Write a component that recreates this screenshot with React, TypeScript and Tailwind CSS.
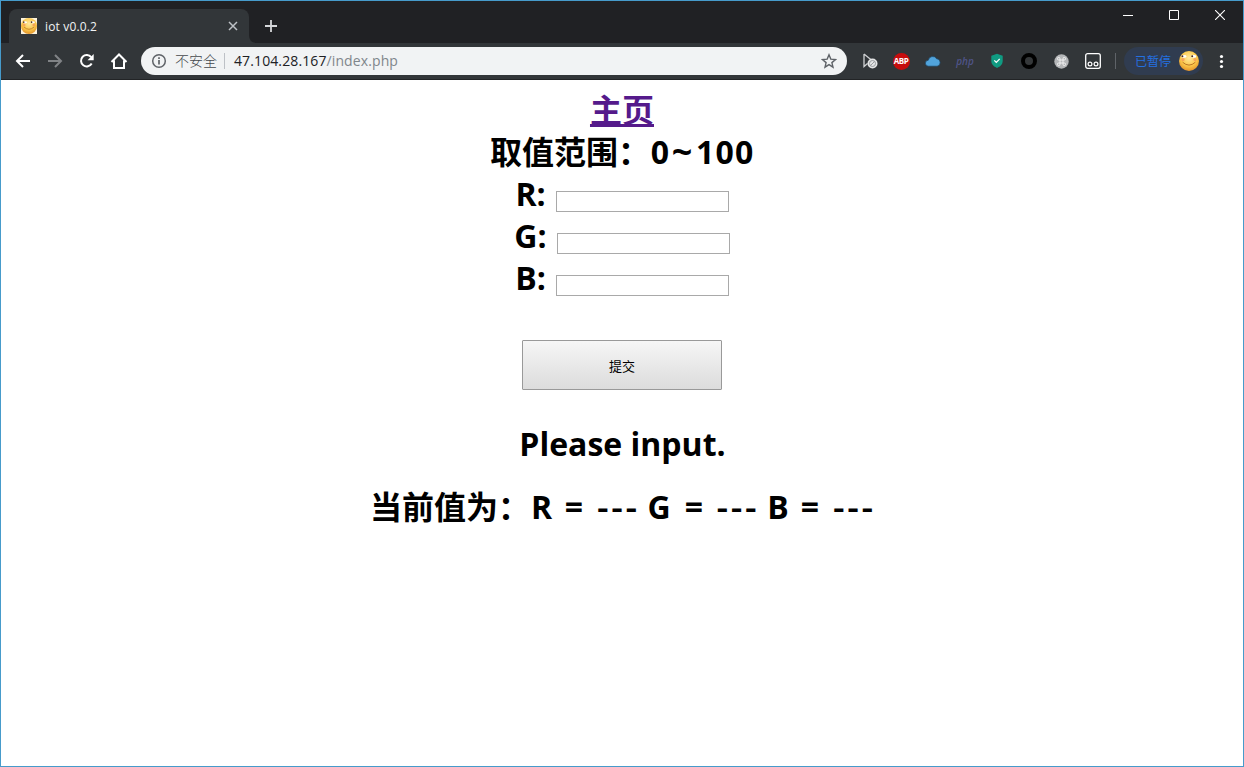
import type { ReactNode } from 'react';

function Face({ id, square = false }: { id: string; square?: boolean }) {
  return (
    <svg viewBox="0 0 20 20" className="block h-full w-full">
      <defs>
        <radialGradient id={id} cx="50%" cy="35%" r="65%">
          <stop offset="0" stopColor="#ffe9a0" />
          <stop offset="0.6" stopColor="#fbc84a" />
          <stop offset="1" stopColor="#e5942a" />
        </radialGradient>
      </defs>
      {square && <rect width="20" height="20" fill="#fdf3dc" />}
      <circle cx="10" cy="10" r="10" fill={`url(#${id})`} />
      <ellipse cx="4.8" cy="5.4" rx="2.8" ry="1.4" fill="#fff" />
      <ellipse cx="14.6" cy="5.4" rx="2.8" ry="1.4" fill="#fff" />
      <circle cx="3.4" cy="5.2" r="1" fill="#4a2a18" />
      <circle cx="13.2" cy="5.2" r="1" fill="#4a2a18" />
      <circle cx="4" cy="8.6" r="1.6" fill="#f58a5a" opacity="0.65" />
      <circle cx="16" cy="8.6" r="1.6" fill="#f58a5a" opacity="0.65" />
      <path d="M3.600 11.200Q10 17 16.400 11.200" fill="none" stroke="#a8601c" strokeWidth=".8" />
    </svg>
  );
}

function Slot({ children }: { children: ReactNode }) {
  return <div className="flex h-8 w-8 shrink-0 items-center justify-center">{children}</div>;
}

function TabStrip() {
  return (
    <div className="flex h-[42px] bg-[#202124] pl-2">
      <div className="mt-2 flex h-[34px] w-[240px] items-center rounded-t-lg bg-[#323639] pr-[10px] pl-3">
        <div className="h-4 w-4 shrink-0"><Face id="tabFace" square /></div>
        <span className="mt-px ml-2 flex-1 text-[12px] leading-4 tracking-[.15px] text-[#f1f3f4]">iot v0.0.2</span>
        <svg width="12" height="12" viewBox="0 0 12 12" stroke="#bdc1c6" strokeWidth="1.500"><path d="M2 2l8 8M10 2l-8 8" /></svg>
      </div>
      <svg className="mt-[34px]" width="8" height="8" viewBox="0 0 8 8"><path d="M0 0Q0 8 8 8H0z" fill="#323639" /></svg>
      <svg className="mt-[18px] ml-[7px]" width="14" height="14" viewBox="0 0 14 14" stroke="#d5d7da" strokeWidth="1.800"><path d="M7 1v12M1 7h12" /></svg>
      <div className="ml-auto flex h-7">
        <div className="flex w-[46px] items-center justify-center">
          <svg width="10" height="10" viewBox="0 0 10 10" stroke="#fff" shapeRendering="crispEdges"><path d="M0 5.500h10" /></svg>
        </div>
        <div className="flex w-[46px] items-center justify-center">
          <svg width="10" height="10" viewBox="0 0 10 10" fill="none" stroke="#fff"><path d="M.5.5h9v9h-9z" /></svg>
        </div>
        <div className="flex w-[46px] items-center justify-center">
          <svg width="10" height="10" viewBox="0 0 10 10" stroke="#fff" strokeWidth="1.100"><path d="M0 0l10 10M10 0L0 10" /></svg>
        </div>
      </div>
    </div>
  );
}

function Toolbar() {
  return (
    <div className="flex h-[37px] items-center border-b border-[#222426] bg-[#323639] pl-[6px]">
      <Slot>
        <svg width="16" height="16" viewBox="0 0 16 16" fill="none" stroke="#fff" strokeWidth="2"><path d="M15 8H2.500M8 2L2 8l6 6" /></svg>
      </Slot>
      <Slot>
        <svg width="16" height="16" viewBox="0 0 16 16" fill="none" stroke="#808386" strokeWidth="2"><path d="M1 8h12.500M8 2l6 6-6 6" /></svg>
      </Slot>
      <Slot>
        <svg width="16" height="16" viewBox="0 0 16 16"><path d="M12.700 10.500A5.700 5.700 0 1 1 12.200 4.200" fill="none" stroke="#fff" strokeWidth="2" /><path d="M14.700 1v6.200H8.500z" fill="#fff" /></svg>
      </Slot>
      <Slot>
        <svg width="18" height="18" viewBox="0 0 18 18" fill="none" stroke="#fff" strokeWidth="2"><path d="M1.500 10L9 2.500l7.500 7.500M4 8.500V16h10V8.500" /></svg>
      </Slot>
      <div className="ml-[6px] flex h-7 w-[706px] shrink-0 items-center rounded-full bg-[#f1f3f4] pr-[10px] pl-[10px]">
        <svg width="16" height="16" viewBox="0 0 16 16" fill="none" stroke="#5f6368" strokeWidth="1.500"><circle cx="8" cy="8" r="6.300" /><path d="M8 7v4.500M8 4.300v1.600" strokeWidth="1.700" /></svg>
        <span className="ml-2 text-[14px] leading-5 font-light text-[#45494d]">不安全</span>
        <div className="ml-[7px] h-4 w-px bg-[#bdc1c6]" />
        <span className="ml-[9px] text-[14px] leading-5 tracking-[.11px] text-[#202124]">47.104.28.167<span className="text-[#80868b]">/index.php</span></span>
        <svg className="ml-auto" width="16" height="16" viewBox="0 0 16 16" fill="none" stroke="#5f6368" strokeWidth="1.400"><path d="M8 1.800l1.800 4.300 4.700.4-3.600 3.100 1.100 4.600L8 11.700l-4 2.500 1.100-4.600L1.500 6.500l4.700-.4z" /></svg>
      </div>
      <div className="ml-[6px] flex">
        <Slot>
          <svg className="ml-[2px]" width="16" height="16" viewBox="0 0 16 16"><path d="M2 1v12.500l3.500-3M2 1l8 6.500" fill="none" stroke="#cfd1d3" strokeWidth="1.300" /><circle cx="10.500" cy="10.500" r="5" fill="#e4e5e6" /><circle cx="10.500" cy="10.500" r="3" fill="none" stroke="#909396" strokeWidth=".9" /><path d="M8.500 12.500l4-4" stroke="#909396" strokeWidth=".9" /></svg>
        </Slot>
        <Slot>
          <div className="flex h-[17px] w-[17px] items-center justify-center rounded-full bg-[#c70d0d] text-[8px] leading-none font-bold tracking-[-.4px] text-white">ABP</div>
        </Slot>
        <Slot>
          <svg width="16" height="12" viewBox="0 0 16 12"><path d="M3.500 11.200a3 3 0 0 1-.2-6A4.500 4.500 0 0 1 11.600 3.700a3.800 3.800 0 0 1 .6 7.500z" fill="#51a4dc" stroke="#1d405c" strokeWidth=".7" /></svg>
        </Slot>
        <Slot>
          <span className="pb-px text-[10px] leading-3 font-semibold text-[#4f5488] italic">php</span>
        </Slot>
        <Slot>
          <svg width="14" height="16" viewBox="0 0 14 16"><path d="M7 .8l5.700 2v5c0 3.500-2.300 5.600-5.700 7.200C3.600 13.400 1.300 11.300 1.300 7.800v-5z" fill="#109b82" /><path d="M4.300 7.400l2 2 3.400-3.500" fill="none" stroke="#fff" strokeWidth="1.300" /></svg>
        </Slot>
        <Slot>
          <div className="h-4 w-4 rounded-full border-4 border-black bg-[#35383a]" />
        </Slot>
        <Slot>
          <svg width="15" height="15" viewBox="0 0 15 15"><circle cx="7.500" cy="7.500" r="7.200" fill="#b4b6b8" /><path d="M6 6V4.700A1.300 1.300 0 1 0 4.700 6h5.600A1.300 1.300 0 1 0 9 4.700v5.600A1.300 1.300 0 1 0 10.300 9H4.700A1.300 1.300 0 1 0 6 10.300z" fill="none" stroke="#f5f5f5" strokeWidth=".9" /></svg>
        </Slot>
        <Slot>
          <svg width="16" height="16" viewBox="0 0 16 16" fill="none" stroke="#fff"><rect x=".7" y=".7" width="14.600" height="14.600" rx="2" strokeWidth="1.300" /><circle cx="5" cy="11" r="1.900" strokeWidth="1.200" /><circle cx="11" cy="11" r="1.900" strokeWidth="1.200" /></svg>
        </Slot>
      </div>
      <div className="ml-[6px] h-4 w-px bg-[#5f6368]" />
      <div className="ml-2 flex h-7 w-[79px] items-center rounded-full bg-[#303c50] pl-[11px]">
        <span className="pt-px text-[12px] leading-5 font-normal text-[#2470e0]">已暂停</span>
        <div className="ml-2 h-5 w-5"><Face id="profileFace" /></div>
      </div>
      <svg className="ml-[15px]" width="6" height="16" viewBox="0 0 6 16" fill="#fff"><circle cx="3.500" cy="3.500" r="1.600" /><circle cx="3.500" cy="8.500" r="1.600" /><circle cx="3.500" cy="13.500" r="1.600" /></svg>
    </div>
  );
}

function Field({ label }: { label: string }) {
  return (
    <label className="flex h-[42px] justify-center">
      <span>{label}:</span>
      <input className="mt-[18px] ml-[10px] h-[21px] w-[173px] border border-[#a9a9a9] bg-white px-1 text-[13px] font-normal outline-none" />
    </label>
  );
}

function Dashes() {
  return <span className="-mr-[2.7px] text-[36px] font-semibold tracking-[2.7px]">---</span>;
}

export default function App() {
  return (
    <div className="flex h-[767px] w-[1244px] flex-col overflow-hidden border border-[#469bcb] bg-white font-['Open_Sans','Noto_Sans_CJK_SC',sans-serif]">
      <TabStrip />
      <Toolbar />
      <main className="flex flex-1 flex-col items-center pt-[9px] text-[32px] leading-[42px] font-bold text-black">
        <a href="#" className="h-[42px] text-[#551a8b] underline decoration-[3px] underline-offset-[2px] [text-decoration-skip-ink:none]">主页</a>
        <div className="flex h-[42px]">
          <span>取值范围：</span>
          <span className="w-5 text-center">0</span>
          <span className="flex w-6 justify-center text-[36px]">~</span>
          <span className="w-[60px] pl-[2px] tracking-[1.200px]">100</span>
        </div>
        <Field label="R" />
        <Field label="G" />
        <Field label="B" />
        <button className="mt-[41px] h-[50px] w-[200px] shrink-0 rounded-[1px] border border-[#999] bg-linear-to-b from-[#f6f6f6] to-[#dcdcdc] pt-px text-[13px] leading-5 font-normal">提交</button>
        <p className="mt-[33px] h-[42px] pl-px">Please input.</p>
        <div className="mt-[21px] flex h-[42px]">
          <span>当前值为：</span>
          <span className="flex w-[26px] justify-center pr-[3px]">R</span>
          <span className="flex w-9 justify-center">=</span>
          <span className="flex w-[50px] justify-center"><Dashes /></span>
          <span className="flex w-[35px] justify-center pr-px">G</span>
          <span className="flex w-[34px] justify-center">=</span>
          <span className="flex w-[51px] justify-center"><Dashes /></span>
          <span className="flex w-[34px] justify-center pr-[2px]">B</span>
          <span className="mr-2 flex w-7 justify-center">=</span>
          <span className="flex w-[42px] justify-center"><Dashes /></span>
        </div>
      </main>
    </div>
  );
}
